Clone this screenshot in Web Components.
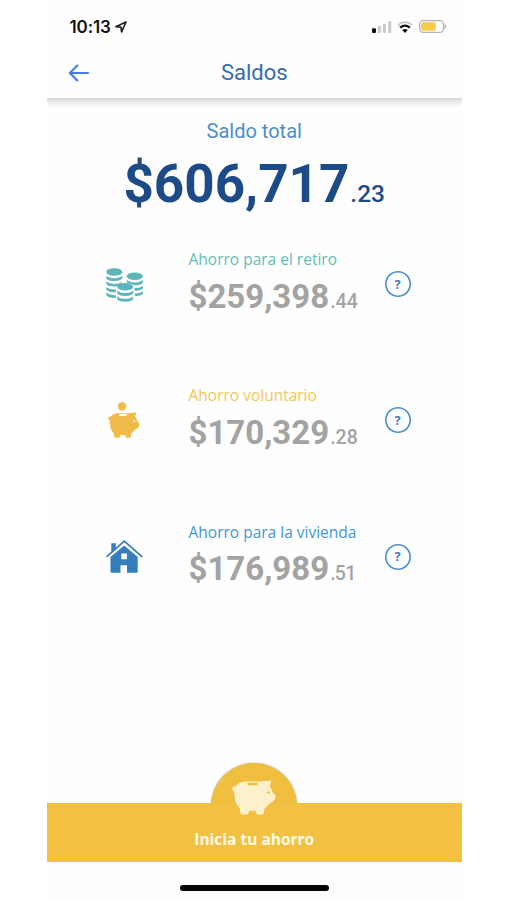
<!DOCTYPE html>
<html lang="es">
<head>
<meta charset="utf-8">
<title>Saldos</title>
<style>
	body {
		margin: 0;
		background: #FFFFFF;
		font-family: Roboto, "Liberation Sans", sans-serif;
	}
</style>
</head>
<body>

<balance-screen>
	<status-bar slot="top">10:13</status-bar>
	<title-bar slot="top">Saldos</title-bar>
	<total-balance cents=".23">
		<span slot="label">Saldo total</span>
		$606,717
	</total-balance>
	<account-row icon="coins" cents=".44" style="--accent: #62BDBB">
		<span slot="label">Ahorro para el retiro</span>
		$259,398
	</account-row>
	<account-row icon="piggy" cents=".28" style="--accent: #F5C653">
		<span slot="label">Ahorro voluntario</span>
		$170,329
	</account-row>
	<account-row icon="house" cents=".51" style="--accent: #4497D2; --cents-spacing: -0.7px">
		<span slot="label">Ahorro para la vivienda</span>
		$176,989
	</account-row>
	<save-button slot="bottom">Inicia tu ahorro</save-button>
</balance-screen>

<script>
const PIG = `<path fill-rule="evenodd" d="M.4 9.2C-.2 7 1.4 5.5 3.6 6.4 5.4 3.4 9 1.8 13 1.6H28.5C31 .6 35 1.5 39.2.2L37.8 6.4C39.2 8 40.3 10.5 41 13.2Q43.8 14 43.7 16.5 43.5 20 41.6 21C39.5 22.8 37 23.6 35 26.2 33.8 27.6 32.6 28.4 32.2 29.6L31.7 33Q31.5 34.4 30 34.4H25.7Q24.4 34.4 24.1 33L23.6 30.8H17.3L16.6 33Q16.2 34.4 14.8 34.4H10Q8.7 34.4 8.5 33L7.7 28.4C5 26 2.9 21.6 2.6 16.5 2.2 14 2.5 11.8 1.9 11.2 1 11 .6 10 .4 9.2ZM15.6 2.8V5.3H25.8V2.8ZM34.9 12.1A1.5 1.1 0 1 0 37.9 12.7 1.5 1.1 0 1 0 34.9 12.1Z"/>`;

const ICONS = {
	coins: `<svg width="38" height="35" viewBox="0 0 38 35" fill="#5CB5B9">
		<ellipse cx="8.3" cy="4" rx="8" ry="3.8"/>
		<path d="M.3 7.8Q2.8 10.2 8.3 10.2T16.4 7.8V10Q15 13 8.3 13T.3 10.2Z"/>
		<path d="M.3 13.6Q3.2 16 8.3 16T16 13.9V15L12 18.3Q2.2 19 .3 15.9Z"/>
		<path d="M.3 19.2Q3.6 21.8 9.8 21.5V24.3Q2.3 24.5 .3 21.5Z"/>
		<path d="M.3 24.8Q3.6 27.4 9.8 27.2V30Q2.3 30.2 .3 27Z"/>
		<ellipse cx="28.8" cy="8.3" rx="8" ry="3.8"/>
		<path d="M20.8 12Q23.3 14.4 28.8 14.4T36.9 12V14.4Q35.5 17.2 28.8 17.2L25.7 16Q21.2 15 20.8 14.4Z"/>
		<path d="M28.5 19.9Q34 20.2 36.9 17.9V20.4Q34.5 22.8 28.7 22.8Z"/>
		<path d="M29 25.3Q34.5 25.3 36.9 23.2V25.8Q34.5 28.2 29 28.3Z"/>
		<ellipse cx="19.2" cy="18.8" rx="8" ry="3.8"/>
		<path d="M11.1 22.5Q13.7 25 19.2 25T27.3 22.5V25Q25.9 27.9 19.2 27.9T11.1 25Z"/>
		<path d="M11.1 28.2Q13.7 30.8 19.2 30.8T27.3 28.2V30.8Q25.9 33.8 19.2 33.8T11.1 30.8Z"/>
	</svg>`,
	piggy: `<svg width="38" height="37" viewBox="0 0 38 37" fill="#F0BC49">
		<circle cx="16" cy="3.4" r="4.1"/>
		<g transform="translate(2.1 9) scale(.718 .745)">${PIG}</g>
	</svg>`,
	house: `<svg width="38" height="36" viewBox="0 0 38 36">
		<path fill="#357EBC" fill-rule="evenodd" d="M5.3 3.2H9.8V8.6L5.3 12.6ZM18.2 5.5 31.7 17V31.7Q31.7 32.7 30.7 32.7H21V25.2H14.5V32.7H5.5Q4.5 32.7 4.5 31.7V17ZM15.3 13.5V19.2H21V13.5Z"/>
		<path fill="none" stroke="#357EBC" stroke-width="1.7" d="M.5 16.8 18.3 1.2 36.2 16.8"/>
	</svg>`
};

class BalanceScreen extends HTMLElement {
	constructor() {
		super();
		this.attachShadow({ mode: "open" }).innerHTML = `
			<style>
				:host {
					display: flex;
					flex-direction: column;
					box-sizing: border-box;
					width: 415.5px;
					height: 900px;
					margin-left: 46.5px;
					background-color: #FEFEFE;
				}

				main {
					flex: 1;
				}

				footer {
					display: flex;
					justify-content: center;
					padding: 23px 0 9px;
				}

				.home {
					width: 149px;
					height: 6px;
					border-radius: 3px;
					background-color: #050505;
				}
			</style>
			<slot name="top"></slot>
			<main><slot></slot></main>
			<slot name="bottom"></slot>
			<footer><div class="home"></div></footer>
		`;
	}
}

class StatusBar extends HTMLElement {
	constructor() {
		super();
		this.attachShadow({ mode: "open" }).innerHTML = `
			<style>
				:host {
					display: flex;
					align-items: center;
					height: 53px;
					margin-bottom: -1px;
					padding: 0 15px 0 23px;
					color: #111111;
					font: 600 17px/20px Inter, "Liberation Sans", sans-serif;
					letter-spacing: -0.1px;
				}

				.arrow {
					margin: 0 auto 0 4px;
				}

				.signal {
					margin-right: 5px;
				}

				.wifi {
					margin-right: 6px;
				}
			</style>
			<slot></slot>
			<svg class="arrow" width="12" height="12" viewBox="0 0 12 12"><path fill="none" stroke="#222" stroke-width="1.7" stroke-linejoin="round" d="M11 1 .9 5.7 5.9 6.1 6.6 11Z"/></svg>
			<svg class="signal" width="20" height="12" viewBox="0 0 20 12" fill="#C9C9C9">
				<rect y="7.2" width="4" height="4.8" rx="1" fill="#111"/>
				<rect x="5.8" y="5" width="3" height="7" rx=".8"/>
				<rect x="11" y="2.8" width="3" height="9.2" rx=".8"/>
				<rect x="16.2" y=".3" width="3" height="11.7" rx=".8"/>
			</svg>
			<svg class="wifi" width="16" height="12" viewBox="0 0 16 12" fill="none">
				<path stroke="#C4C4C4" stroke-width="1.7" d="M.8 4.1Q8-1.9 15.2 4.1"/>
				<path stroke="#111" stroke-width="2.3" d="M3.1 6.7Q8 2.5 12.9 6.7"/>
				<path fill="#111" d="M5.2 9.1Q8 6.9 10.8 9.1L8 11.9Z"/>
			</svg>
			<svg width="28" height="13" viewBox="0 0 28 13">
				<rect x=".7" y=".7" width="23.8" height="11.6" rx="3.5" fill="#FFF" stroke="#B4B4B4" stroke-width="1.3"/>
				<rect x="2.2" y="2.3" width="14.6" height="8.4" rx="1.6" fill="#F8CC46"/>
				<path fill="#B4B4B4" d="M25.5 4.3Q27.3 4.8 27.3 6.5T25.5 8.7Z"/>
			</svg>
		`;
	}
}

class TitleBar extends HTMLElement {
	constructor() {
		super();
		this.attachShadow({ mode: "open" }).innerHTML = `
			<style>
				:host {
					display: grid;
					grid-template-columns: 60px 1fr 60px;
					grid-template-rows: 42px 4px;
					align-items: center;
					color: #386CA8;
					text-align: center;
				}

				:host::after {
					content: "";
					grid-column: 1 / -1;
					align-self: end;
					height: 10px;
					margin-bottom: -10px;
					background: linear-gradient(#D2D2D2, #E8E8E8 35%, #F7F7F7 70%, #FEFEFE);
				}

				svg {
					margin-left: 21px;
				}

				h1 {
					margin: 0;
					font-size: 22px;
					font-weight: 400;
					line-height: 42px;
				}
			</style>
			<svg width="22" height="18" viewBox="0 0 22 18" fill="none" stroke="#437CEB" stroke-width="2.1" stroke-linecap="round" stroke-linejoin="round"><path d="M20 9H2M9.3 1.6 1.8 9 9.3 16.4"/></svg>
			<h1><slot></slot></h1>
			<span></span>
		`;
	}
}

class TotalBalance extends HTMLElement {
	constructor() {
		super();
		this.attachShadow({ mode: "open" }).innerHTML = `
			<style>
				:host {
					display: block;
					padding-top: 20px;
					height: 130px;
					text-align: center;
				}

				.label {
					color: #4B8EC8;
					font-size: 20px;
					line-height: 26px;
				}

				.amount {
					display: flex;
					justify-content: center;
					align-items: baseline;
					gap: 1px;
					margin-top: 9px;
					color: #1D4B88;
					font-size: 53px;
					font-weight: 700;
					line-height: 62px;
				}

				small {
					font-size: 24.5px;
					font-weight: 500;
				}
			</style>
			<div class="label"><slot name="label"></slot></div>
			<div class="amount"><span><slot></slot></span><small></small></div>
		`;
	}

	connectedCallback() {
		this.shadowRoot.querySelector("small").textContent = this.getAttribute("cents");
	}
}

class HelpButton extends HTMLElement {
	constructor() {
		super();
		this.attachShadow({ mode: "open" }).innerHTML = `
			<style>
				:host {
					display: block;
				}

				button {
					display: grid;
					place-items: center;
					width: 26px;
					height: 26px;
					padding: 0;
					border: 0;
					border-radius: 50%;
					background: transparent;
					box-shadow: inset 0 0 0 1.6px #4A8FD0;
					color: #4380B8;
					font: 700 13px/1 "Open Sans", sans-serif;
				}
			</style>
			<button>?</button>
		`;
	}
}

class AccountRow extends HTMLElement {
	constructor() {
		super();
		this.attachShadow({ mode: "open" }).innerHTML = `
			<style>
				:host {
					display: grid;
					grid-template-columns: 142px 196px auto;
					align-items: start;
					height: 136.25px;
				}

				.icon {
					display: flex;
					align-items: center;
					height: 74px;
					padding-left: 59px;
				}

				.icon svg {
					overflow: visible;
				}

				.label {
					color: var(--accent);
					font: 400 15.5px/22px "Open Sans", sans-serif;
				}

				.amount {
					display: flex;
					align-items: baseline;
					gap: 1px;
					margin-top: 7.5px;
					color: #A3A3A3;
					font-size: 33px;
					font-weight: 700;
					line-height: 38px;
				}

				small {
					font-size: 19.5px;
					font-weight: 500;
					letter-spacing: var(--cents-spacing, 0);
				}

				help-button {
					margin-top: 23px;
				}
			</style>
			<div class="icon"></div>
			<div>
				<div class="label"><slot name="label"></slot></div>
				<div class="amount"><span><slot></slot></span><small></small></div>
			</div>
			<help-button></help-button>
		`;
	}

	connectedCallback() {
		this.shadowRoot.querySelector(".icon").innerHTML = ICONS[this.getAttribute("icon")];
		this.shadowRoot.querySelector("small").textContent = this.getAttribute("cents");
	}
}

class SaveButton extends HTMLElement {
	constructor() {
		super();
		this.attachShadow({ mode: "open" }).innerHTML = `
			<style>
				:host {
					display: flex;
					flex-direction: column;
					height: 99px;
				}

				.dome {
					display: grid;
					justify-content: center;
					justify-items: center;
					height: 39.5px;
					z-index: 1;
				}

				/* full circle, only the part above the bar is shown */
				.dome::before {
					content: "";
					grid-area: 1 / 1;
					width: 86px;
					height: 86px;
					border-radius: 50%;
					background-color: #F1BF40;
					box-shadow: 0 0 2px rgba(90, 90, 90, .55);
					clip-path: inset(-4px -4px 46px);
				}

				.dome svg {
					grid-area: 1 / 1;
					margin-top: 17px;
					z-index: 1;
				}

				.bar {
					height: 59.5px;
					background-color: #F3C141;
					color: #FFFBEA;
					text-align: center;
					font: 700 15.5px/22px "Open Sans", sans-serif;
				}

				.bar span {
					display: block;
					padding-top: 25px;
				}
			</style>
			<div class="dome"><svg width="44" height="35" viewBox="0 0 44 35" fill="#FDF1CC">${PIG}</svg></div>
			<div class="bar"><span><slot></slot></span></div>
		`;
	}
}

customElements.define("balance-screen", BalanceScreen);
customElements.define("status-bar", StatusBar);
customElements.define("title-bar", TitleBar);
customElements.define("total-balance", TotalBalance);
customElements.define("help-button", HelpButton);
customElements.define("account-row", AccountRow);
customElements.define("save-button", SaveButton);
</script>
</body>
</html>
